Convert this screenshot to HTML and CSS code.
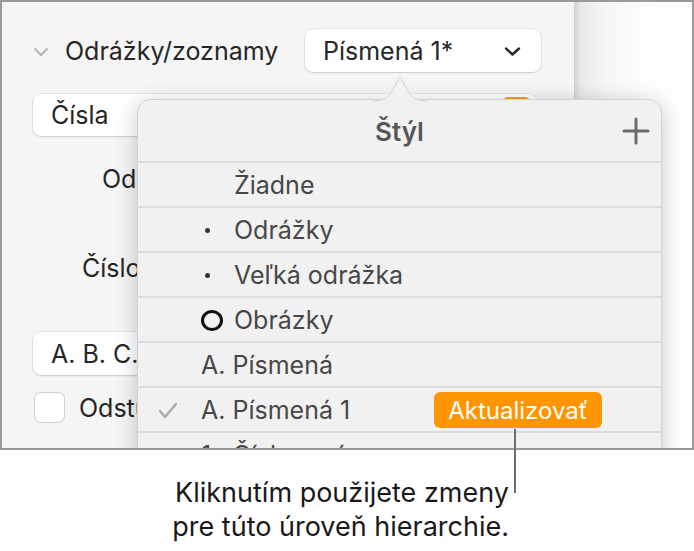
FILE: index.html
```html
<!DOCTYPE html>
<html lang="sk">
<head>
<meta charset="utf-8">
<title>Odrážky/zoznamy</title>
<link rel="stylesheet" href="styles.css">
</head>
<body>
<div class="stage">
  <div class="frame">
    <div class="sidebar">
      <div class="head">
        <span class="disclosure">
          <svg width="16" height="10" viewBox="0 0 16 10"><path d="M2 2 L8 8 L14 2" fill="none" stroke="#b4b4b4" stroke-width="2" stroke-linecap="round" stroke-linejoin="round"/></svg>
        </span>
        <span class="title">Odrážky/zoznamy</span>
        <div class="popup style-popup">
          <span>Písmená 1*</span>
          <svg class="popup-chev" width="17" height="11" viewBox="0 0 17 11"><path d="M2 2.5 L8.5 8.5 L15 2.5" fill="none" stroke="#2a2a2a" stroke-width="2.4" stroke-linecap="round" stroke-linejoin="round"/></svg>
        </div>
      </div>
      <div class="popup wide">
        <span>Čísla</span>
        <span class="swatch"></span>
      </div>
      <div class="label l1">Odsadenie:</div>
      <div class="label l2">Číslovanie:</div>
      <div class="popup abc"><span>A. B. C.</span></div>
      <div class="check-row">
        <span class="checkbox"></span>
        <span class="check-label">Odstupňované</span>
      </div>
    </div>
    <div class="doc"></div>

    <svg class="arrow" width="56" height="28" viewBox="0 0 56 28">
      <path d="M0 27 C12 27 17 23 21 16 L26 5 Q28 1.5 30 5 L35 16 C39 23 44 27 56 27 Z" fill="#f1f1f1"/>
      <path d="M0 27 C12 27 17 23 21 16 L26 5 Q28 1.5 30 5 L35 16 C39 23 44 27 56 27" fill="none" stroke="#d2d2d2" stroke-width="1"/>
    </svg>
    <div class="popover">
      <div class="pop-head">
        <span></span>
        <span class="pop-title">Štýl</span>
        <svg class="plus" width="28" height="28" viewBox="0 0 28 28"><path d="M14 2 V26 M2 14 H26" stroke="#6b6b6b" stroke-width="3" stroke-linecap="round"/></svg>
      </div>
      <div class="item"><span class="mk"></span><span class="gap33"></span><span>Žiadne</span></div>
      <div class="item"><span class="mk"></span><span class="bullet-col"><span class="dot"></span></span><span>Odrážky</span></div>
      <div class="item"><span class="mk"></span><span class="bullet-col"><span class="dot"></span></span><span>Veľká odrážka</span></div>
      <div class="item"><span class="mk"></span><span class="ring"></span><span>Obrázky</span></div>
      <div class="item"><span class="mk"></span><span>A. Písmená</span></div>
      <div class="item">
        <span class="mk"><svg width="20" height="17" viewBox="0 0 20 17"><path d="M2 9 L7 15 L18 2" fill="none" stroke="#ababab" stroke-width="2.4" stroke-linecap="round" stroke-linejoin="round"/></svg></span>
        <span>A. Písmená 1</span>
        <span class="update">Aktualizovať</span>
      </div>
      <div class="item"><span class="mk"></span><span>1.&nbsp;&nbsp;Číslované</span></div>
    </div>
  </div>
  <div class="leader"></div>
  <div class="callout">
    <p>Kliknutím použijete zmeny</p>
    <p>pre túto úroveň hierarchie.</p>
  </div>
</div>
</body>
</html>
```

FILE: styles.css
```css
* { box-sizing: border-box; }
html, body { margin: 0; padding: 0; background: #ffffff; }
body { font-family: "Inter", "Noto Sans", sans-serif; color: #222; }

.stage { position: relative; width: 694px; height: 551px; overflow: hidden; }

.frame {
  position: relative;
  width: 694px;
  height: 450px;
  border: 2px solid #9a9a9a;
  display: flex;
  overflow: hidden;
}

.sidebar {
  width: 572px;
  flex: none;
  background: #f5f5f5;
  padding: 27px 33px 0 31px;
  display: flex;
  flex-direction: column;
  font-size: 25px;
  color: #262626;
}

.doc {
  flex: 1;
  background: linear-gradient(90deg, #d6d6d6 0, #e9e9e9 6px, #f6f6f6 30px, #fdfdfd 70px, #ffffff 100%);
  border-left: 1px solid #d0d0d0;
}

.head { display: flex; align-items: center; height: 43px; }
.disclosure { width: 32px; display: flex; align-items: center; padding-top: 2px; }

.popup {
  background: #ffffff;
  border-radius: 8px;
  box-shadow: 0 0 0 0.5px rgba(0,0,0,0.12), 0 1px 2px rgba(0,0,0,0.12);
  display: flex;
  align-items: center;
  padding-left: 18px;
}
.style-popup { margin-left: auto; width: 236px; height: 43px; padding-right: 20px; justify-content: space-between; }
.popup-chev { margin-top: 2px; }

.wide { margin-top: 22px; height: 42px; width: 504px; position: relative; }
.swatch {
  position: absolute;
  right: 7px;
  top: 3px;
  width: 27px;
  height: 30px;
  border-radius: 5px;
  background: #f2a21a;
}

.label { height: 30px; line-height: 30px; }
.l1 { margin-top: 28px; margin-left: 69px; }
.l2 { margin-top: 59px; margin-left: 49px; }

.abc { margin-top: 49px; height: 43px; width: 240px; }

.check-row { margin-top: 18px; display: flex; align-items: center; height: 29px; }
.checkbox {
  width: 29px; height: 29px;
  margin-left: 2px;
  background: #fff;
  border-radius: 6px;
  box-shadow: 0 0 0 1px #d2d2d2, 0 1px 1px rgba(0,0,0,0.08);
}
.check-label { margin-left: 15px; }

/* popover */
.arrow { position: absolute; left: 370px; top: 72px; z-index: 3; }

.popover {
  position: absolute;
  left: 135px;
  top: 97px;
  width: 525px;
  height: 420px;
  background: #f1f1f1;
  border: 1px solid #d2d2d2;
  border-radius: 14px;
  box-shadow: 0 4px 22px rgba(0,0,0,0.22);
  z-index: 2;
  font-size: 25px;
  color: #474747;
}

.pop-head {
  height: 63px;
  border-bottom: 2px solid #dcdcdc;
  display: grid;
  grid-template-columns: 1fr auto 1fr;
  align-items: center;
}
.pop-title { font-weight: 600; font-size: 26px; color: #565656; padding-top: 2px; }
.plus { justify-self: end; margin-right: 11px; }

.item {
  height: 45px;
  border-bottom: 2px solid #dcdcdc;
  display: flex;
  align-items: center;
  padding-top: 1px;
}
.mk { width: 63px; flex: none; display: flex; align-items: center; padding-left: 20px; }
.gap33 { width: 33px; flex: none; }
.bullet-col { width: 33px; flex: none; display: flex; align-items: center; padding-left: 4px; }
.dot { width: 5px; height: 5px; border-radius: 50%; background: #333; }
.ring {
  width: 22px; height: 21px;
  border: 3px solid #111;
  border-radius: 50%;
  margin-right: 11px;
  flex: none;
}

.update {
  margin-left: auto;
  margin-right: 59px;
  width: 168px;
  height: 36px;
  border-radius: 6px;
  background: #ff9500;
  color: #fff;
  font-size: 24px;
  display: flex;
  align-items: center;
  justify-content: center;
}

.leader {
  position: absolute;
  left: 514px;
  top: 429px;
  width: 2px;
  height: 64px;
  background: #6e6e6e;
  z-index: 4;
}

.callout {
  width: 509px;
  margin-top: 26px;
  text-align: right;
  font-size: 27px;
  line-height: 34px;
  color: #1a1a1a;
}
.callout p { margin: 0; }
```
